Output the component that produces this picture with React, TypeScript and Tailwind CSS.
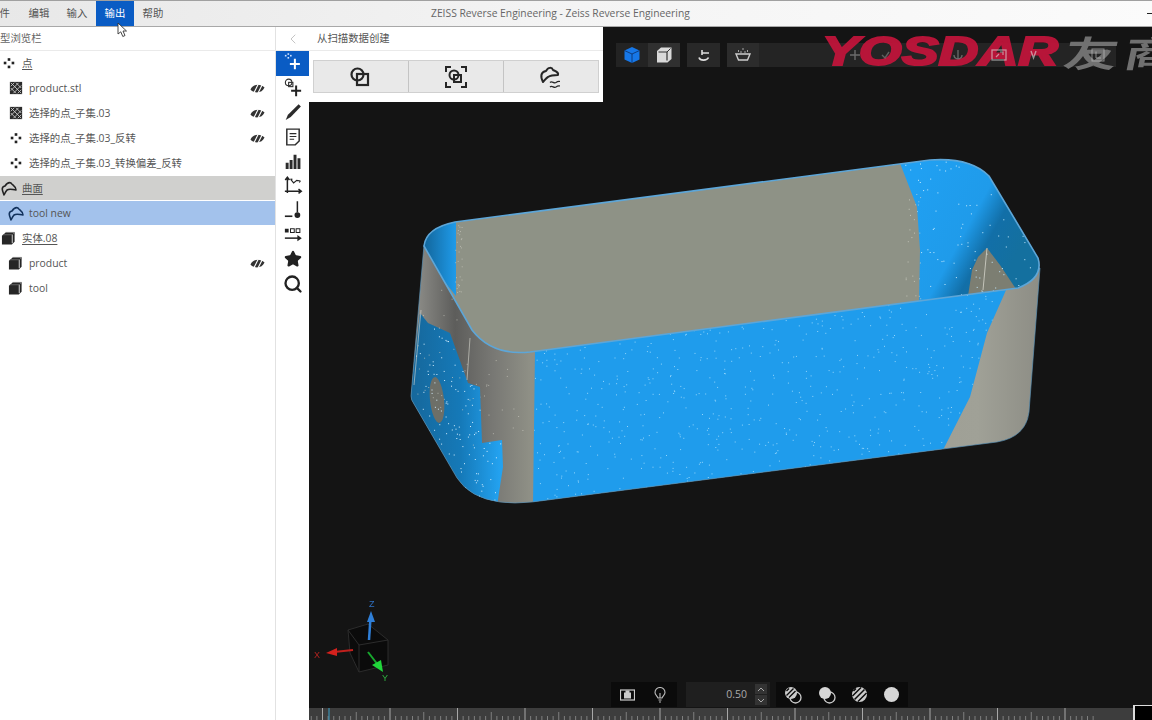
import { ChevronLeft, Search, Star } from "lucide-react";
import type { ReactNode } from "react";

const uiFont = "[font-family:'Open_Sans','Noto_Sans_CJK_SC',sans-serif]";

// deterministic scatter for the white noise on the scanned surface
function speckle(seed: number, count: number, x: number, y: number, w: number, h: number) {
  let s = seed;
  const next = () => {
    s = (s * 1664525 + 1013904223) % 4294967296;
    return s / 4294967296;
  };
  let d = "";
  for (let i = 0; i < count; i++) {
    const px = (x + next() * w).toFixed(1);
    const py = (y + next() * h).toFixed(1);
    d += `M${px} ${py}h1`;
  }
  return d;
}

const Ico = ({ size = 16, children, className = "" }: { size?: number; children: ReactNode; className?: string }) => (
  <svg width={size} height={size} viewBox="0 0 16 16" className={`shrink-0 ${className}`}>
    {children}
  </svg>
);

const PointsIcon = ({ color = "#222" }: { color?: string }) => (
  <Ico size={14}>
    <g fill={color}>
      <rect x="6.5" y="2.5" width="3" height="3" />
      <rect x="2" y="6.5" width="3" height="3" />
      <rect x="11" y="6.5" width="3" height="3" />
      <rect x="6.5" y="11" width="3" height="3" />
    </g>
  </Ico>
);

const MeshIcon = () => (
  <Ico size={14}>
    <rect x="1" y="1" width="14" height="14" fill="#2b2b2b" />
    <path d="M2 6L6 2M2 11L11 2M5 14L14 5M10 14L14 10M2 2L14 14M2 8L8 14M8 2L14 8" stroke="#ccc" strokeWidth="1" />
  </Ico>
);

const SurfaceIcon = ({ color = "#222" }: { color?: string }) => (
  <Ico size={16}>
    <path d="M3 15C1 10 0 7 4 6C6 3 8 2 10 3C11 5 15 6 15 10C12 10 9 8 6 10C5 11 4 13 3 15Z" fill="none" stroke={color} strokeWidth="1.6" strokeLinejoin="round" />
  </Ico>
);

const SolidIcon = () => (
  <Ico size={15}>
    <path d="M1 5L5 1.5H14.5V11.5L11.5 14.5H1Z" fill="#262626" />
    <path d="M12 4V13" stroke="#ddd" strokeWidth="1" />
    <path d="M5 1.5H14.5L12 4H2" stroke="#777" strokeWidth="0.8" fill="none" />
  </Ico>
);

const HiddenEye = () => (
  <Ico size={15} className="ml-auto mr-[10px]">
    <path d="M0.5 9C3 4 10 2 15.5 7C13 13 5 14 0.5 9Z" fill="#333" />
    <path d="M3.5 14L9 3M7.5 15L13 4" stroke="#fff" strokeWidth="1.2" />
  </Ico>
);

type Row = { label: string; icon: ReactNode; level: 1 | 2; hidden?: boolean; bg?: string; under?: boolean };

const rows: Row[] = [
  { label: "点", icon: <PointsIcon />, level: 1, under: true },
  { label: "product.stl", icon: <MeshIcon />, level: 2, hidden: true },
  { label: "选择的点_子集.03", icon: <MeshIcon />, level: 2, hidden: true },
  { label: "选择的点_子集.03_反转", icon: <PointsIcon />, level: 2, hidden: true },
  { label: "选择的点_子集.03_转换偏差_反转", icon: <PointsIcon />, level: 2 },
  { label: "曲面", icon: <SurfaceIcon />, level: 1, bg: "bg-[#d0d0ce]", under: true },
  { label: "tool new", icon: <SurfaceIcon color="#12325c" />, level: 2, bg: "bg-[#a3c2ec]" },
  { label: "实体.08", icon: <SolidIcon />, level: 1, under: true },
  { label: "product", icon: <SolidIcon />, level: 2, hidden: true },
  { label: "tool", icon: <SolidIcon />, level: 2 },
];

const toolIcons: ReactNode[] = [
  <Ico size={20} key="a">
    <g fill="#cfe2ff">
      <rect x="1.5" y="1.5" width="1.3" height="1.3" />
      <rect x="3.6" y="0.2" width="1.3" height="1.3" />
      <rect x="5.6" y="1.5" width="1.3" height="1.3" />
      <rect x="3.6" y="3.2" width="1.3" height="1.3" />
    </g>
    <path d="M9.5 4.5V13M5.5 8.7H13.5" stroke="#fff" strokeWidth="1.6" />
  </Ico>,
  <Ico size={20} key="b">
    <circle cx="4.5" cy="3.5" r="2.6" fill="none" stroke="#333" strokeWidth="0.9" />
    <rect x="4.5" y="3.5" width="3.4" height="3.4" fill="none" stroke="#333" strokeWidth="0.9" />
    <path d="M10.5 6V14.5M6.5 10.2H14.5" stroke="#222" strokeWidth="1.6" />
  </Ico>,
  <Ico size={18} key="c">
    <path d="M13 1L15 3L6 12.5L1.5 15L3.5 10.5Z" fill="#2b2b2b" />
  </Ico>,
  <Ico size={18} key="d">
    <path d="M2.5 1H13.5V11.5L10 15H2.5Z" fill="none" stroke="#2b2b2b" strokeWidth="1.3" />
    <path d="M5 5H11M5 7.5H11M5 10H9" stroke="#2b2b2b" strokeWidth="1" />
  </Ico>,
  <Ico size={18} key="e">
    <path d="M1.5 9.5h2.6V15H1.5zM5 7h2.6v8H5zM8.5 2.5h2.6V15H8.5zM12 5.5h2.6V15H12z" fill="#2b2b2b" />
  </Ico>,
  <Ico size={20} key="f">
    <path d="M3.5 1.5V13.5M1.8 3.2L3.5 1L5.2 3.2M1.5 12.2H14M12.4 10.5L14.6 12.2L12.4 13.9" fill="none" stroke="#222" strokeWidth="1.2" />
    <path d="M6 2.5L8.5 5.5L11 3.5L14 4M6 2.5l1.6 .1M14 4l-1 1.2" fill="none" stroke="#222" strokeWidth="0.9" />
  </Ico>,
  <Ico size={20} key="g">
    <path d="M1.5 13H7.5" stroke="#222" strokeWidth="1.3" />
    <path d="M11.5 1V10" stroke="#222" strokeWidth="1.2" />
    <circle cx="11.5" cy="12" r="2.3" fill="#222" />
  </Ico>,
  <Ico size={20} key="h">
    <rect x="1.5" y="3" width="3" height="3" fill="#222" />
    <rect x="6" y="3" width="3" height="3" fill="none" stroke="#222" strokeWidth="0.8" />
    <rect x="10.5" y="3" width="3" height="3" fill="none" stroke="#222" strokeWidth="0.8" />
    <path d="M1.5 10.5H13" stroke="#222" strokeWidth="1.2" />
    <path d="M11.5 8L15 10.5L11.5 13Z" fill="#222" />
  </Ico>,
  <Star key="i" size={18} fill="#222" stroke="#222" />,
  <Search key="j" size={20} stroke="#222" strokeWidth={2.8} />,
];

const frontBlue = "535,350 533,506 943,450 970,397 987,333 1003,297 1006,290";
const leftBlue = "420,313 428,323 450,333 468,383 480,387 482,443 502,440 503,467 497,506 473,498 457,478 410,398";
const rightBlue = "898,158 917,207 920,250 919,305 1050,290 1050,150";
const body = "M424 245L411 396Q411 400 414 404L457 478Q470 498 500 502Q514 504 532 502L997 442Q1026 437 1029 412L1040 268Z";
const opening = "M424 246Q426 228 455 222L930 160Q970 157 989 176L1038 258Q1044 278 1018 288L530 352Q492 356 472 330Z";

const Model = () => (
  <svg className="absolute inset-0 blur-[0.4px]" width="843" height="681" viewBox="309 27 843 681">
    <defs>
      <linearGradient id="wall" gradientUnits="userSpaceOnUse" x1="411" y1="0" x2="1040" y2="0">
        <stop offset="0" stopColor="#93938e" />
        <stop offset="0.07" stopColor="#5d5d5b" />
        <stop offset="0.13" stopColor="#787874" />
        <stop offset="0.19" stopColor="#8f9086" />
        <stop offset="0.9" stopColor="#a0a197" />
        <stop offset="1" stopColor="#8d8d85" />
      </linearGradient>
      <linearGradient id="leftPatch" gradientUnits="userSpaceOnUse" x1="412" y1="0" x2="500" y2="0">
        <stop offset="0" stopColor="#16689c" />
        <stop offset="0.55" stopColor="#1579b8" />
        <stop offset="1" stopColor="#23a2f0" />
      </linearGradient>
      <linearGradient id="rightPatch" gradientUnits="userSpaceOnUse" x1="920" y1="170" x2="1030" y2="230">
        <stop offset="0" stopColor="#20a0f2" />
        <stop offset="0.55" stopColor="#1f9bea" />
        <stop offset="0.75" stopColor="#126fa8" />
        <stop offset="1" stopColor="#14709f" />
      </linearGradient>
      <linearGradient id="cornerPatch" gradientUnits="userSpaceOnUse" x1="426" y1="0" x2="456" y2="0">
        <stop offset="0" stopColor="#1369a0" />
        <stop offset="1" stopColor="#1f9bea" />
      </linearGradient>
      <clipPath id="clipOpening">
        <path d={opening} />
      </clipPath>
      <clipPath id="clipBody">
        <path d={body} />
      </clipPath>
      <clipPath id="clipFront">
        <polygon points={frontBlue} />
      </clipPath>
      <clipPath id="clipLeft">
        <polygon points={leftBlue} />
      </clipPath>
      <clipPath id="clipRight">
        <polygon points={rightBlue} />
      </clipPath>
    </defs>

    <path d={body} fill="url(#wall)" />
    <g clipPath="url(#clipBody)">
      <polygon points={frontBlue} fill="#1f9cec" />
      <polygon points={leftBlue} fill="url(#leftPatch)" />
      <ellipse cx="437" cy="400" rx="7" ry="23" transform="rotate(-6 437 400)" fill="#6d6f68" />
      <g clipPath="url(#clipFront)">
        <path d={speckle(7, 800, 533, 290, 475, 216)} stroke="#a9e0ff" strokeWidth="1" opacity="0.85" />
      </g>
      <g clipPath="url(#clipLeft)">
        <path d={speckle(11, 200, 410, 313, 95, 190)} stroke="#d5efff" strokeWidth="1" />
      </g>
      <path d={speckle(19, 60, 412, 290, 120, 160)} stroke="#c9c9bf" strokeWidth="1" opacity="0.7" />
      <path d="M421 310L414 385M470 338L467 380" stroke="#d9d9d0" strokeWidth="1" opacity="0.6" fill="none" />
    </g>
    <path d={body} fill="none" stroke="#5b95bb" strokeWidth="1" opacity="0.65" />

    <path d={opening} fill="#8e9286" />
    <g clipPath="url(#clipOpening)">
      <polygon points="456,215 456,296 415,245 415,215" fill="url(#cornerPatch)" />
      <polygon points={rightBlue} fill="url(#rightPatch)" />
      <polygon points="968,296 972,270 978,257 987,248 1000,265 1018,292" fill="#7c7e72" />
      <g clipPath="url(#clipRight)">
        <path d={speckle(23, 110, 900, 160, 145, 140)} stroke="#c7ecff" strokeWidth="1" />
      </g>
      <path d="M987 248L983 290" stroke="#d6d6cc" strokeWidth="0.8" fill="none" />
      <path d={speckle(29, 30, 455, 225, 7, 70)} stroke="#c9c9bf" strokeWidth="1" opacity="0.7" />
      <path d={speckle(31, 24, 905, 190, 16, 110)} stroke="#d6d6cc" strokeWidth="1" opacity="0.7" />
    </g>
    <path d={opening} fill="none" stroke="#5da6d8" strokeWidth="1.6" />

    {/* orientation cube */}
    <path d="M348 630L368 624L388 640L388 665L359 672L350 653Z" fill="#0b0b0b" stroke="#2c2c2c" />
    <path d="M348 630L359 645L388 640M359 645L359 672" fill="none" stroke="#2c2c2c" />
    <path d="M369 640L370.5 618" stroke="#2f7fd8" strokeWidth="2.5" />
    <path d="M371 611L367 622H375Z" fill="#2f7fd8" />
    <path d="M353 650L334 652" stroke="#c0201d" strokeWidth="2" />
    <path d="M326 653L337 648V656Z" fill="#d4211d" />
    <path d="M368 652L378 665" stroke="#17a82d" strokeWidth="2" />
    <path d="M383 672L372 665L381 660Z" fill="#21d63b" />
    <text x="369" y="607" fontSize="9" fill="#2f6fc0" fontFamily="Liberation Sans">Z</text>
    <text x="314" y="658" fontSize="9" fill="#b52420" fontFamily="Liberation Sans">X</text>
    <text x="382" y="681" fontSize="9" fill="#2fb040" fontFamily="Liberation Sans">Y</text>
  </svg>
);

const Ruler = () => {
  const ticks = Array.from({ length: 150 }, (_, i) => i);
  return (
    <svg className="block shrink-0" width="843" height="12" viewBox="0 0 843 12">
      <rect width="843" height="12" fill="#3d3d3d" />
      {ticks.map((i) => {
        const major = i % 12 === 0;
        const mid = i % 6 === 0;
        return (
          <line
            key={i}
            x1={13.5 + (i - 12) * 5.625}
            x2={13.5 + (i - 12) * 5.625}
            y1={major ? 0 : mid ? 4 : 8}
            y2={12}
            stroke={major ? "#a8a8a8" : "#7f7f7f"}
          />
        );
      })}
      <line x1="20" x2="20" y1="0" y2="12" stroke="#3aa0c8" />
    </svg>
  );
};

const TopTools = () => (
  <div className="absolute left-[307px] top-[16px] flex h-[24px] gap-[7px]">
    <div className="flex w-[64px] bg-[#232323]">
      <div className="flex w-[32px] items-center justify-center">
        <svg width="18" height="18" viewBox="0 0 18 18">
          <path d="M9 1L16.5 4.5V13.5L9 17L1.5 13.5V4.5Z" fill="#1677e8" />
          <path d="M1.5 4.5L9 8L16.5 4.5M9 8V17" stroke="#0b2f66" strokeWidth="0.8" fill="none" />
        </svg>
      </div>
      <div className="flex w-[32px] items-center justify-center bg-[#303030]">
        <svg width="18" height="18" viewBox="0 0 18 18">
          <path d="M6 1.5H16.5V13L12.5 16.5H2V5Z" fill="#d9d9d9" />
          <path d="M3.5 6H12V14.5" fill="none" stroke="#333" strokeWidth="1.2" />
          <path d="M12 6L15.5 2.5" stroke="#333" strokeWidth="1" />
        </svg>
      </div>
    </div>
    <div className="flex w-[33px] items-center justify-center bg-[#282828]">
      <svg width="16" height="16" viewBox="0 0 16 16" fill="none" stroke="#ddd" strokeWidth="1.6">
        <path d="M3 10.5C4 14 11 14 12.5 10.5" />
        <path d="M6 6H13M6 3V8" />
      </svg>
    </div>
    <div className="flex w-[389px] items-center bg-[#242424]">
      <div className="flex w-[32px] items-center justify-center self-stretch bg-[#2c2c2c]">
        <svg width="18" height="14" viewBox="0 0 18 14" fill="none" stroke="#ccc">
          <path d="M2 6H16L13.5 12H4.5Z" strokeWidth="1.4" />
          <path d="M4 3h1M8.5 1h1M13 3h1M6.5 4h1M10.5 4h1" strokeWidth="1.4" />
        </svg>
      </div>
    </div>
  </div>
);

const BottomTools = () => (
  <div className="absolute bottom-[1px] left-[302px] flex h-[25px] items-stretch gap-[9px]">
    <div className="flex w-[66px] items-center justify-between bg-[#0b0b0b] px-[9px]">
      <svg width="15" height="12" viewBox="0 0 15 12" fill="none" stroke="#ccc">
        <rect x="0.5" y="1" width="14" height="10" strokeWidth="1.2" />
        <rect x="4.5" y="4" width="6" height="5" fill="#ccc" />
        <rect x="6" y="2" width="3" height="1.5" fill="#ccc" />
      </svg>
      <svg className="mr-[2px]" width="12" height="16" viewBox="0 0 12 16" fill="none" stroke="#bbb" strokeWidth="1.1">
        <path d="M4 11C3.5 9 1 8 1 5.5a5 5 0 0 1 10 0C11 8 8.5 9 8 11Z" />
        <path d="M4.5 13H7.5M5 15H7M6 11V6" />
      </svg>
    </div>
    <div className="flex w-[84px] items-center justify-end bg-[#1f1f1f] pr-[3px]">
      <span className={`mr-[8px] text-[10.5px] text-[#aaa] ${uiFont}`}>0.50</span>
      <div className="flex flex-col gap-[1px]">
        <div className="flex h-[10px] w-[12px] items-center justify-center bg-[#333]">
          <svg width="8" height="5" viewBox="0 0 8 5" fill="none" stroke="#aaa"><path d="M1 4L4 1L7 4" /></svg>
        </div>
        <div className="flex h-[10px] w-[12px] items-center justify-center bg-[#333]">
          <svg width="8" height="5" viewBox="0 0 8 5" fill="none" stroke="#aaa"><path d="M1 1L4 4L7 1" /></svg>
        </div>
      </div>
    </div>
    <div className="-ml-[3px] flex w-[132px] items-center justify-between bg-[#0b0b0b] pl-[8px] pr-[9px]">
      <svg width="18" height="18" viewBox="0 0 18 18">
        <circle cx="11.5" cy="11.5" r="5.5" fill="none" stroke="#ccc" strokeWidth="1.3" />
        <circle cx="7" cy="7" r="6" fill="#ccc" />
        <path d="M2.5 5L5 2.5M2.5 9.5L9.5 2.5M5 11.5L11.5 5" stroke="#0b0b0b" strokeWidth="1.4" />
      </svg>
      <svg width="18" height="18" viewBox="0 0 18 18">
        <circle cx="11.5" cy="11.5" r="5.5" fill="none" stroke="#ccc" strokeWidth="1.3" />
        <circle cx="7" cy="7" r="6" fill="#d6d6d6" />
      </svg>
      <svg width="17" height="17" viewBox="0 0 17 17">
        <circle cx="8.5" cy="8.5" r="7.5" fill="#ccc" />
        <path d="M2.5 5L5 2.5M1.5 10L10 1.5M3.5 13.5L13.5 3.5M7 15.5L15.5 7" stroke="#0b0b0b" strokeWidth="1.5" />
      </svg>
      <div className="h-[15px] w-[15px] rounded-full bg-[#d6d6d6]" />
    </div>
  </div>
);

// faint toolbar glyphs that show through the watermark
const FaintGlyphs = () => (
  <svg className="absolute left-[515px] top-[16px] opacity-60" width="300" height="24" viewBox="0 0 300 24" fill="none">
    <path d="M26 12H36M31 7V17" stroke="#999" strokeWidth="1.4" />
    <path d="M58 12L61 15L65 9" stroke="#888" strokeWidth="1.4" />
    <path d="M134 7V16M130 12C130 17 138 17 138 12" stroke="#999" strokeWidth="1.3" />
    <rect x="168" y="7" width="14" height="10" stroke="#ddd" strokeWidth="1.3" />
    <path d="M172 14l3-3M176 9h3v3" stroke="#ddd" strokeWidth="1.2" />
    <path d="M207 8L209.5 15L212 8" stroke="#ddd" strokeWidth="1.4" />
    <rect x="268" y="6" width="12" height="12" stroke="#ccc" />
    <path d="M272 8.5V15H277" stroke="#ccc" />
  </svg>
);

export default function App() {
  return (
    <div className={`flex h-[720px] w-[1152px] flex-col overflow-hidden bg-white text-[10.4px] text-[#555] ${uiFont}`}>
      <header className="flex h-[27px] shrink-0 items-stretch border-b border-t border-b-[#a8a8a8] border-t-[#a0a0a0] bg-gradient-to-r from-[#e8e8e8] via-[#f4f4f4] to-[#fbfbfb]">
        <div className="flex w-[20px] items-center justify-end pr-[10px]">件</div>
        <div className="flex w-[38px] items-center justify-center">编辑</div>
        <div className="flex w-[38px] items-center justify-center">输入</div>
        <div className="flex w-[38px] items-center justify-center bg-[#0a5cc4] text-white">输出</div>
        <div className="flex w-[38px] items-center justify-center">帮助</div>
        <div className="ml-[259px] flex items-center whitespace-nowrap text-[10.3px] text-[#666]">
          ZEISS Reverse Engineering - Zeiss Reverse Engineering
        </div>
        <div className="ml-auto flex items-center">
          <div className="h-[1px] w-[5px] bg-[#222]" />
        </div>
      </header>

      <div className="relative flex min-h-0 flex-1">
        <aside className="flex w-[276px] shrink-0 flex-col border-r border-[#e2e2e2]">
          <div className="-mr-[1px] flex h-[24px] shrink-0 items-center border-b border-[#eaeaea] pt-[1px]">
            <span className="text-[#666]">型浏览栏</span>
          </div>
          <div className="flex flex-col">
            {rows.map((r) => (
              <div
                key={r.label}
                className={`flex h-[25px] items-center border-b border-white ${r.level === 1 ? "pl-[1px]" : "pl-[8px]"} ${r.bg ?? ""}`}
              >
                <div className="flex w-[15px] shrink-0 justify-center">{r.icon}</div>
                <span className={`ml-[6px] pt-[1px] ${r.under ? "underline underline-offset-2" : ""}`}>{r.label}</span>
                {r.hidden && <HiddenEye />}
              </div>
            ))}
          </div>
        </aside>

        <div className="flex w-[33px] shrink-0 flex-col">
          <div className="flex h-[24px] items-center justify-center border-b border-[#eaeaea]">
            <ChevronLeft size={16} stroke="#c4c4c4" strokeWidth={1.5} />
          </div>
          {toolIcons.map((icon, i) => (
            <div
              key={i}
              className={`flex h-[24.5px] items-center justify-center ${i === 0 ? "bg-[#0a5cc4]" : ""}`}
            >
              {icon}
            </div>
          ))}
        </div>

        <main className="flex min-w-0 flex-1 flex-col bg-[#141414]">
          <div className="relative min-h-0 flex-1">
            <Model />
            <TopTools />
            <BottomTools />
            <div className="absolute left-[513px] top-[4px] flex items-center whitespace-nowrap opacity-90">
              <span className="w-[236px] origin-left scale-x-[1.38] text-[40px] font-bold italic leading-none text-[#c8143c] [-webkit-text-stroke:2px_#c8143c] [font-family:'Liberation_Sans',sans-serif]">
                YOSDAR
              </span>
              <span className="ml-[7px] w-[60px] origin-left scale-x-[1.5] skew-x-[-8deg] text-[36px] font-bold leading-none text-[#7a7a7a] [font-family:'Noto_Sans_CJK_SC',sans-serif]">
                友
              </span>
              <span className="w-[60px] origin-left scale-x-[1.5] skew-x-[-8deg] text-[36px] font-bold leading-none text-[#7a7a7a] [font-family:'Noto_Sans_CJK_SC',sans-serif]">
                商
              </span>
            </div>
            <FaintGlyphs />
          </div>
          <div className="relative">
            <Ruler />
            <div className="absolute -top-[3px] right-0 h-[15px] w-[19px] border-l-2 border-t border-[#ddd] bg-black" />
          </div>
        </main>

        <div className="absolute left-[309px] top-0 w-[294px] bg-white">
          <div className="flex h-[24px] items-center border-b border-[#eaeaea] pl-[8px] text-[#555]">从扫描数据创建</div>
          <div className="flex h-[51px] items-start px-[4px] pt-[9px]">
            <div className="flex h-[33px] flex-1 border border-[#d0d0d0] bg-[#e9e9e9]">
              <div className="flex w-[95px] items-center justify-center border-r border-[#c4c4c4] pr-[2px]">
                <svg width="22" height="22" viewBox="0 0 22 22" fill="none" stroke="#262626" strokeWidth="2.2">
                  <circle cx="8.5" cy="8.5" r="6" />
                  <rect x="8" y="8" width="11" height="11" />
                </svg>
              </div>
              <div className="flex w-[95px] items-center justify-center border-r border-[#c4c4c4]">
                <svg width="24" height="24" viewBox="0 0 24 24" fill="none" stroke="#262626" strokeWidth="2">
                  <path d="M2 7V2H7M17 2H22V7M22 17V22H17M7 22H2V17" />
                  <circle cx="10" cy="10" r="4.5" />
                  <rect x="10" y="10" width="7" height="7" />
                </svg>
              </div>
              <div className="flex flex-1 items-center justify-center">
                <svg width="24" height="24" viewBox="0 0 24 24" fill="none" stroke="#262626">
                  <path d="M4 17C1 11 2 7 7 6C9 2 13 2 14 5C16 6 20 7 19 10C16 10 12 10 9 12C7 13 6 15 4 17Z" strokeWidth="2" strokeLinejoin="round" />
                  <path d="M11 17.5C13 15.5 15 19 17 17.5S20 16.5 21 16.5M11 22C13 20 15 23.5 17 22S20 21 21 21" strokeWidth="1.2" />
                </svg>
              </div>
            </div>
          </div>
        </div>

        {/* mouse pointer */}
        <svg className="absolute left-[117px] top-[-5px]" width="11" height="16" viewBox="0 0 11 16">
          <path d="M1 1V12L3.8 9.8L5.8 14.5L8 13.5L6 9H9.5Z" fill="#fff" stroke="#333" strokeWidth="0.9" />
        </svg>
      </div>
    </div>
  );
}
